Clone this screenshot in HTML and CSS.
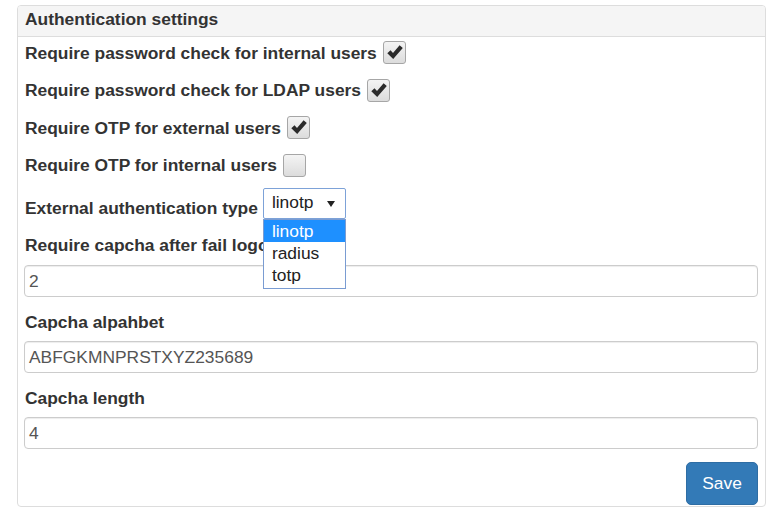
FILE: index.html
```html
<!DOCTYPE html>
<html>
<head>
<meta charset="utf-8">
<link rel="stylesheet" href="styles.css">
</head>
<body>
<div class="panel">
  <div class="panel-heading">Authentication settings</div>
  <div class="panel-body">
    <div class="check-row row-first">
      <span class="label">Require password check for internal users</span>
      <span class="checkbox checked"><svg viewBox="0 0 23 23" width="23" height="23"><path d="M4.3 12.3 L7.5 9.3 L10 12 L16.6 4.2 L19.8 7.1 L10.2 17.9 Z" fill="#2b2b2b"/></svg></span>
    </div>
    <div class="check-row">
      <span class="label">Require password check for LDAP users</span>
      <span class="checkbox checked"><svg viewBox="0 0 23 23" width="23" height="23"><path d="M4.3 12.3 L7.5 9.3 L10 12 L16.6 4.2 L19.8 7.1 L10.2 17.9 Z" fill="#2b2b2b"/></svg></span>
    </div>
    <div class="check-row">
      <span class="label">Require OTP for external users</span>
      <span class="checkbox checked"><svg viewBox="0 0 23 23" width="23" height="23"><path d="M4.3 12.3 L7.5 9.3 L10 12 L16.6 4.2 L19.8 7.1 L10.2 17.9 Z" fill="#2b2b2b"/></svg></span>
    </div>
    <div class="check-row">
      <span class="label">Require OTP for internal users</span>
      <span class="checkbox"></span>
    </div>
    <div class="select-row">
      <span class="label">External authentication type</span>
      <div class="select-wrap">
        <div class="select">
          <span>linotp</span>
          <svg class="arrow" viewBox="0 0 8 6" width="8" height="6"><path d="M0 0 H8 L4 6 Z" fill="#222"/></svg>
        </div>
        <div class="dropdown">
          <div class="option active">linotp</div>
          <div class="option">radius</div>
          <div class="option">totp</div>
        </div>
      </div>
    </div>
    <div class="field-label first-field">Require capcha after fail logon</div>
    <div class="input">2</div>
    <div class="field-label">Capcha alpahbet</div>
    <div class="input">ABFGKMNPRSTXYZ235689</div>
    <div class="field-label">Capcha length</div>
    <div class="input">4</div>
    <div class="actions">
      <button class="btn">Save</button>
    </div>
  </div>
</div>
</body>
</html>
```

FILE: styles.css
```css
html, body {
  margin: 0;
  padding: 0;
  background: #fff;
}
body {
  font-family: "Liberation Sans", Arial, sans-serif;
  font-size: 17.4px;
  color: #333;
}
.panel {
  margin: 5px 0 0 17px;
  width: 749px;
  height: 502px;
  box-sizing: border-box;
  border: 1px solid #ddd;
  border-radius: 4px;
  display: flex;
  flex-direction: column;
}
.panel-heading {
  height: 31px;
  box-sizing: border-box;
  border-bottom: 1px solid #ddd;
  background: #f5f5f5;
  border-radius: 3px 3px 0 0;
  padding-left: 7px;
  font-weight: bold;
  line-height: 27px;
}
.panel-body {
  padding: 4px 7px 0 6px;
  display: flex;
  flex-direction: column;
}
.label, .field-label {
  font-weight: bold;
  line-height: 20px;
  margin-left: 1px;
}
.check-row {
  height: 23px;
  display: flex;
  align-items: center;
  margin-top: 14.5px;
}
.check-row.row-first {
  margin-top: 0;
}
.checkbox {
  width: 23px;
  height: 23px;
  box-sizing: border-box;
  margin-left: 6px;
  border: 1px solid #a6a6a6;
  border-radius: 3px;
  background: linear-gradient(#f4f4f4, #dcdcdc);
  display: block;
  position: relative;
}
.checkbox svg {
  position: absolute;
  left: -1px;
  top: -1px;
}
.select-row {
  display: flex;
  align-items: flex-end;
  margin-top: 11.5px;
  height: 31px;
}
.select-row .label {
  margin-bottom: 1px;
}
.select-wrap {
  position: relative;
  margin-left: 5px;
}
.select {
  width: 83px;
  height: 31px;
  box-sizing: border-box;
  border: 1px solid #7da2d8;
  border-radius: 2px;
  padding-left: 8px;
  display: flex;
  align-items: center;
  font-weight: normal;
  color: #222;
  position: relative;
}
.select span {
  margin-top: -3px;
}
.arrow {
  position: absolute;
  left: 63px;
  top: 12px;
}
.dropdown {
  position: absolute;
  left: 0;
  top: 31px;
  width: 83px;
  box-sizing: border-box;
  border: 1px solid #7a9cd2;
  background: #fff;
  padding-bottom: 2px;
  z-index: 2;
}
.option {
  height: 22px;
  line-height: 22px;
  padding-left: 8px;
  color: #222;
}
.option.active {
  background: #1e90ff;
  color: #fff;
}
.field-label {
  margin-top: 15px;
}
.field-label.first-field {
  margin-top: 16px;
}
.input {
  margin-top: 9px;
  height: 32px;
  box-sizing: border-box;
  border: 1px solid #ccc;
  border-radius: 4px;
  box-shadow: inset 0 1px 1px rgba(0,0,0,0.075);
  padding-left: 4px;
  line-height: 30px;
  color: #555;
}
.first-field + .input {
  margin-top: 10px;
}
.actions {
  display: flex;
  justify-content: flex-end;
  margin-top: 13px;
}
.btn {
  width: 72px;
  height: 43px;
  box-sizing: border-box;
  background: #337ab7;
  border: 1px solid #2e6da4;
  border-radius: 5px;
  color: #fff;
  font-family: "Liberation Sans", Arial, sans-serif;
  font-size: 17.4px;
  padding: 0;
}
```
